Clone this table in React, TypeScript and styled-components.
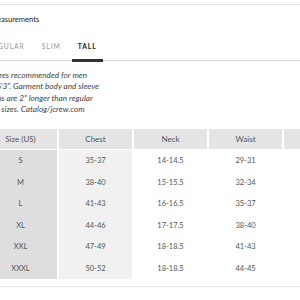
import React from 'react';
import styled, { createGlobalStyle } from 'styled-components';

const rows = [
  { size: 'S', chest: '35-37', neck: '14-14.5', waist: '29-31', sleeve: '34' },
  { size: 'M', chest: '38-40', neck: '15-15.5', waist: '32-34', sleeve: '35' },
  { size: 'L', chest: '41-43', neck: '16-16.5', waist: '35-37', sleeve: '36' },
  { size: 'XL', chest: '44-46', neck: '17-17.5', waist: '38-40', sleeve: '37' },
  { size: 'XXL', chest: '47-49', neck: '18-18.5', waist: '41-43', sleeve: '37.5' },
  { size: 'XXXL', chest: '50-52', neck: '18-18.5', waist: '44-45', sleeve: '38' },
];

const tabs = ['Regular', 'Slim', 'Tall'];

const App = () => (
  <>
    <GlobalStyle />
    <Page>
      <Panel>
        <Title>Measurements</Title>
        <TabBar>
          {tabs.map((t) => (
            <Tab key={t} $active={t === 'Tall'}>
              {t}
            </Tab>
          ))}
        </TabBar>
        <Description>
          Tall sizes recommended for men over 6'3". Garment body and sleeve lengths are 2" longer than
          regular men's sizes. Catalog/jcrew.com
        </Description>
        <Table>
          <HeadCell>Size (US)</HeadCell>
          <HeadCell>Chest</HeadCell>
          <HeadCell>Neck</HeadCell>
          <HeadCell>Waist</HeadCell>
          <HeadCell>Sleeve</HeadCell>
          {rows.map((r) => (
            <React.Fragment key={r.size}>
              <Cell $tone="dark">{r.size}</Cell>
              <Cell $tone="light">{r.chest}</Cell>
              <Cell>{r.neck}</Cell>
              <Cell>{r.waist}</Cell>
              <Cell>{r.sleeve}</Cell>
            </React.Fragment>
          ))}
        </Table>
      </Panel>
    </Page>
  </>
);

const GlobalStyle = createGlobalStyle`
  html, body {
    margin: 0;
    padding: 0;
    background: #fff;
    overflow: hidden;
  }
  body {
    font-family: Lato, "Open Sans", sans-serif;
    color: #333;
  }
`;

const Page = styled.div`
  width: 300px;
  height: 300px;
  overflow: hidden;
  padding-top: 4px;
  box-sizing: border-box;
`;

const Panel = styled.div`
  margin-left: -20px;
  width: 400px;
  border-top: 1px solid #e4e4e4;
  border-bottom: 1px solid #e4e4e4;
  padding-bottom: 7px;
`;

const Title = styled.h2`
  margin: 8px 0 0;
  padding-left: 10px;
  font-size: 7.6px;
  line-height: 12px;
  font-weight: 400;
  color: #222;
`;

const TabBar = styled.div`
  display: flex;
  gap: 5px;
  margin-top: 15px;
  padding-left: 2px;
  border-bottom: 1px solid #d2d2d2;
`;

const Tab = styled.div<{ $active?: boolean }>`
  padding: 0 6px 7px;
  margin-bottom: -2px;
  font-size: 6.8px;
  line-height: 12px;
  letter-spacing: 0.9px;
  text-transform: uppercase;
  font-weight: ${(p) => (p.$active ? 700 : 400)};
  color: ${(p) => (p.$active ? '#222' : '#999')};
  border-bottom: 3px solid ${(p) => (p.$active ? '#333' : 'transparent')};
`;

const Description = styled.p`
  margin: 9px 0 0;
  width: 121px;
  font-size: 8.2px;
  line-height: 11.3px;
  font-style: italic;
  color: #444;
`;

const Table = styled.div`
  display: grid;
  grid-template-columns: repeat(5, 73px);
  grid-template-rows: 21px repeat(6, 21.5px);
  column-gap: 2px;
  margin: 14px 0 0 4px;
`;

const HeadCell = styled.div`
  display: flex;
  align-items: center;
  justify-content: center;
  background: #e4e4e4;
  border-bottom: 1px solid #fff;
  font-size: 8px;
  color: #555;
`;

const Cell = styled.div<{ $tone?: 'dark' | 'light' }>`
  display: flex;
  align-items: center;
  justify-content: center;
  font-size: 7.5px;
  color: #555;
  background: ${(p) => (p.$tone === 'dark' ? '#dedede' : p.$tone === 'light' ? '#f1f1f1' : '#fff')};
`;

export default App;
